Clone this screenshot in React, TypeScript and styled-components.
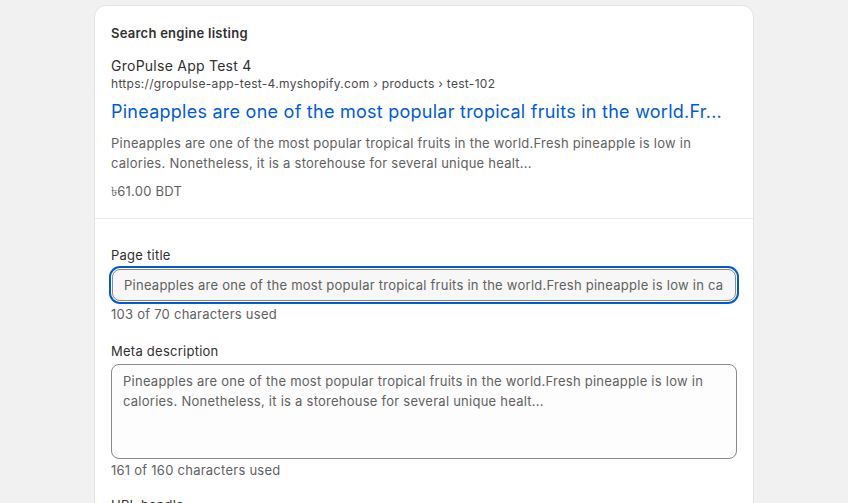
import styled, { createGlobalStyle } from "styled-components";

const GlobalStyle = createGlobalStyle`
  html, body {
    margin: 0;
    padding: 0;
    background: #f1f1f1;
    font-family: Inter, "Noto Sans", "Liberation Sans", sans-serif;
    letter-spacing: 0.25px;
    -webkit-font-smoothing: antialiased;
  }
`;

const Page = styled.div`
  display: flex;
  justify-content: center;
  align-items: flex-start;
  padding-top: 5px;
  height: 503px;
  overflow: hidden;
  box-sizing: border-box;
`;

const Card = styled.div`
  width: 660px;
  background: #ffffff;
  border-radius: 12px;
  border: 1px solid #e3e3e3;
  box-sizing: border-box;
  flex-shrink: 0;
`;

const Section = styled.div<{ $top?: number; $bottom?: number }>`
  display: flex;
  flex-direction: column;
  padding: ${(p) => p.$top ?? 16}px 16px ${(p) => p.$bottom ?? 16}px;
`;

const Divider = styled.hr`
  margin: 0;
  border: none;
  border-top: 1px solid #ebebeb;
`;

const Heading = styled.h2`
  margin: 0;
  font-size: 13px;
  line-height: 20px;
  font-weight: 600;
  color: #303030;
`;

const StoreName = styled.div`
  margin-top: 13px;
  font-size: 14px;
  line-height: 20px;
  color: #303030;
`;

const Url = styled.div`
  font-size: 12px;
  line-height: 16px;
  color: #4a4a4a;
  letter-spacing: 0.3px;
`;

const PreviewTitle = styled.div`
  margin-top: 8px;
  font-size: 18px;
  line-height: 24px;
  color: #005bd3;
  white-space: nowrap;
`;

const PreviewText = styled.p<{ $gap: number }>`
  margin: ${(p) => p.$gap}px 0 0;
  font-size: 13px;
  line-height: 20px;
  color: #616161;
`;

const Field = styled.div<{ $gap?: number }>`
  display: flex;
  flex-direction: column;
  margin-top: ${(p) => p.$gap ?? 0}px;
`;

const Label = styled.label<{ $space?: number }>`
  font-size: 13px;
  line-height: 20px;
  color: #303030;
  margin-bottom: ${(p) => p.$space ?? 4}px;
`;

const TextInput = styled.input<{ $focused?: boolean }>`
  height: 32px;
  box-sizing: border-box;
  padding: 0 11px;
  margin: 0 1px;
  border: 1px solid #8a8a8a;
  border-radius: 8px;
  background: ${(p) => (p.$focused ? "#f7f7f7" : "#fdfdfd")};
  font-family: inherit;
  letter-spacing: inherit;
  font-size: 13px;
  color: #616161;
  outline: ${(p) => (p.$focused ? "2px solid #005bd3" : "none")};
  outline-offset: 1px;
`;

const TextArea = styled.textarea`
  height: 95px;
  box-sizing: border-box;
  padding: 6px 11px;
  border: 1px solid #8a8a8a;
  border-radius: 8px;
  background: #fdfdfd;
  font-family: inherit;
  letter-spacing: inherit;
  font-size: 13px;
  line-height: 20px;
  color: #616161;
  resize: none;
  outline: none;
`;

const Help = styled.div<{ $space?: number }>`
  font-size: 13px;
  line-height: 20px;
  color: #616161;
  margin-top: ${(p) => p.$space ?? 3}px;
`;

const title =
  "Pineapples are one of the most popular tropical fruits in the world.Fresh pineapple is low in calories. Nonetheless, it is a storehouse for several unique healt...";

export default function App() {
  return (
    <>
      <GlobalStyle />
      <Page>
        <Card>
          <Section $top={17} $bottom={17}>
            <Heading>Search engine listing</Heading>
            <StoreName>GroPulse App Test 4</StoreName>
            <Url>https://gropulse-app-test-4.myshopify.com › products › test-102</Url>
            <PreviewTitle>
              Pineapples are one of the most popular tropical fruits in the world.Fr...
            </PreviewTitle>
            <PreviewText $gap={9}>{title}</PreviewText>
            <PreviewText $gap={8}>৳61.00 BDT</PreviewText>
          </Section>
          <Divider />
          <Section $top={26}>
            <Field>
              <Label>Page title</Label>
              <TextInput $focused readOnly value={title} />
              <Help>103 of 70 characters used</Help>
            </Field>
            <Field $gap={17}>
              <Label $space={3}>Meta description</Label>
              <TextArea readOnly value={title} />
              <Help $space={1}>161 of 160 characters used</Help>
            </Field>
            <Field $gap={15}>
              <Label>URL handle</Label>
              <TextInput readOnly value="test-102" />
            </Field>
          </Section>
        </Card>
      </Page>
    </>
  );
}
